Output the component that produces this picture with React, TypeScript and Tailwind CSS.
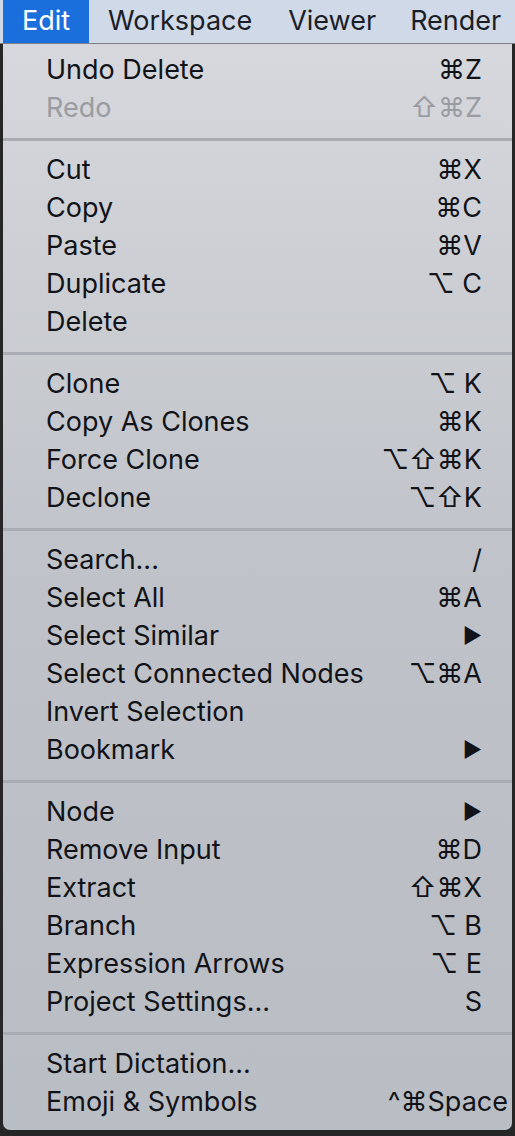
type Item = { label: string; key?: string; disabled?: boolean; sub?: boolean; wide?: boolean };

const groups: Item[][] = [
  [
    { label: "Undo Delete", key: "⌘Z" },
    { label: "Redo", key: "⇧⌘Z", disabled: true },
  ],
  [
    { label: "Cut", key: "⌘X" },
    { label: "Copy", key: "⌘C" },
    { label: "Paste", key: "⌘V" },
    { label: "Duplicate", key: "⌥ C" },
    { label: "Delete" },
  ],
  [
    { label: "Clone", key: "⌥ K" },
    { label: "Copy As Clones", key: "⌘K" },
    { label: "Force Clone", key: "⌥⇧⌘K" },
    { label: "Declone", key: "⌥⇧K" },
  ],
  [
    { label: "Search...", key: "/" },
    { label: "Select All", key: "⌘A" },
    { label: "Select Similar", sub: true },
    { label: "Select Connected Nodes", key: "⌥⌘A" },
    { label: "Invert Selection" },
    { label: "Bookmark", sub: true },
  ],
  [
    { label: "Node", sub: true },
    { label: "Remove Input", key: "⌘D" },
    { label: "Extract", key: "⇧⌘X" },
    { label: "Branch", key: "⌥ B" },
    { label: "Expression Arrows", key: "⌥ E" },
    { label: "Project Settings...", key: "S" },
  ],
  [
    { label: "Start Dictation..." },
    { label: "Emoji & Symbols", key: "^⌘Space", wide: true },
  ],
];

function Row({ item }: { item: Item }) {
  return (
    <div
      className={
        "flex h-[38px] items-center justify-between pl-[43px] " +
        (item.wide ? "pr-[4px] " : "pr-[30px] ") +
        (item.disabled ? "text-[#9a9ca1]" : "text-[#111318]")
      }
    >
      <span>{item.label}</span>
      {item.sub ? (
        <span className="text-[21px]">▶</span>
      ) : (
        <span className="whitespace-pre">{item.key}</span>
      )}
    </div>
  );
}

export default function App() {
  return (
    <div className="w-[515px] h-[1136px] bg-[#262626] font-['Inter','Noto_Sans',sans-serif] text-[27px] overflow-hidden">
      <div className="flex h-[44px] items-stretch bg-[#cfd9e8] border-b border-[#7d8089] text-[#1b1e27]">
        <div className="ml-[3px] flex w-[86px] items-center justify-center bg-[#1b6fdc] text-white">
          Edit
        </div>
        <div className="flex items-center pl-[19px]">Workspace</div>
        <div className="flex items-center pl-[36px]">Viewer</div>
        <div className="flex items-center pl-[34px]">Render</div>
      </div>
      <div className="mx-[3px] h-[1086px] rounded-b-[7px] bg-gradient-to-b from-[#d6d8dd] via-[#bfc2c8] to-[#b9bdc4] pt-[7px] pb-[9px]">
        {groups.map((g, i) => (
          <div key={i}>
            {i > 0 && (
              <div className="flex h-[24px] items-center">
                <div className="h-[3px] w-full bg-[#a9acb2]" />
              </div>
            )}
            {g.map((it) => (
              <Row key={it.label} item={it} />
            ))}
          </div>
        ))}
      </div>
    </div>
  );
}
